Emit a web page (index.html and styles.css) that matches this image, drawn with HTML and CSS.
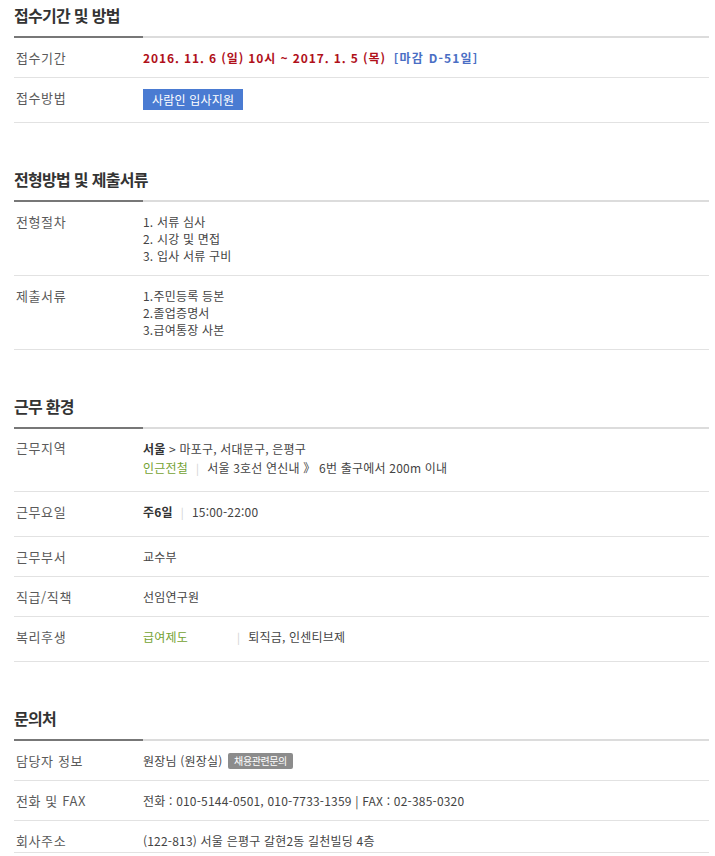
FILE: index.html
```html
<!DOCTYPE html>
<html lang="ko">
<head>
<meta charset="utf-8">
<title>채용 정보</title>
<link rel="stylesheet" href="styles.css">
</head>
<body>
<div class="page">
  <section class="sec">
    <h2 class="sec-title">접수기간 및 방법</h2>
    <div class="row">
      <div class="lbl">접수기간</div>
      <div class="val"><span class="date">2016. 11. 6 (일) 10시 ~ 2017. 1. 5 (목)</span><span class="dday">[마감 D-51일]</span></div>
    </div>
    <div class="row row-btn">
      <div class="lbl">접수방법</div>
      <div class="val"><span class="btn">사람인 입사지원</span></div>
    </div>
  </section>

  <section class="sec">
    <h2 class="sec-title">전형방법 및 제출서류</h2>
    <div class="row">
      <div class="lbl">전형절차</div>
      <div class="val">1. 서류 심사<br>2. 시강 및 면접<br>3. 입사 서류 구비</div>
    </div>
    <div class="row">
      <div class="lbl">제출서류</div>
      <div class="val">1.주민등록 등본<br>2.졸업증명서<br>3.급여통장 사본</div>
    </div>
  </section>

  <section class="sec">
    <h2 class="sec-title">근무 환경</h2>
    <div class="row row-loc">
      <div class="lbl">근무지역</div>
      <div class="val">
        <div class="line"><b class="strong">서울</b> &gt; 마포구, 서대문구, 은평구</div>
        <div class="line"><span class="green">인근전철</span><span class="sep">|</span>서울 3호선 연신내 》 6번 출구에서 200m 이내</div>
      </div>
    </div>
    <div class="row row-tall">
      <div class="lbl">근무요일</div>
      <div class="val"><b class="strong">주6일</b><span class="sep">|</span>15:00-22:00</div>
    </div>
    <div class="row">
      <div class="lbl">근무부서</div>
      <div class="val">교수부</div>
    </div>
    <div class="row">
      <div class="lbl">직급/직책</div>
      <div class="val">선임연구원</div>
    </div>
    <div class="row row-tall">
      <div class="lbl">복리후생</div>
      <div class="val"><span class="green welfare">급여제도</span><span class="sep">|</span>퇴직금, 인센티브제</div>
    </div>
  </section>

  <section class="sec">
    <h2 class="sec-title">문의처</h2>
    <div class="row">
      <div class="lbl">담당자 정보</div>
      <div class="val">원장님 (원장실) <span class="badge">채용관련문의</span></div>
    </div>
    <div class="row">
      <div class="lbl">전화 및 FAX</div>
      <div class="val">전화 : 010-5144-0501, 010-7733-1359 | FAX : 02-385-0320</div>
    </div>
    <div class="row row-last">
      <div class="lbl">회사주소</div>
      <div class="val">(122-813) 서울 은평구 갈현2동 길천빌딩 4층</div>
    </div>
  </section>
</div>
</body>
</html>
```

FILE: styles.css
```css
html, body {
  margin: 0;
  padding: 0;
  background: #fff;
}

body {
  font-family: "Noto Sans CJK KR", "Noto Sans", sans-serif;
  color: #444;
  font-size: 12px;
}

.page {
  padding: 0 6px 0 14px;
}

.sec {
  margin-bottom: 41px;
}

.sec-title {
  margin: 0;
  padding: 4px 0 12px;
  font-size: 16px;
  line-height: 22px;
  font-weight: 700;
  letter-spacing: -0.7px;
  color: #333;
  background: linear-gradient(to right, #777 0, #777 129px, #dcdcdc 129px, #dcdcdc 100%) left bottom / 100% 2px no-repeat;
}

.row {
  display: grid;
  grid-template-columns: 129px 1fr;
  padding: 11px 0;
  border-bottom: 1px solid #e2e2e2;
  line-height: 17px;
}

.row-btn {
  padding: 11px 0 12px;
}

.row-loc {
  padding: 10px 0 13px;
}

.row-loc .line {
  line-height: 19px;
}

.row-tall {
  padding: 11px 0 15px;
}

.row-last {
  padding-bottom: 3px;
}

.lbl {
  padding-left: 2px;
  font-size: 13px;
  color: #5a5a5a;
  letter-spacing: 0.6px;
}

.val {
  font-size: 12px;
  color: #444;
  letter-spacing: 0.2px;
}

.date {
  color: #b0101a;
  font-weight: 700;
  letter-spacing: 0.9px;
}

.dday {
  margin-left: 8px;
  color: #4a6ec4;
  font-weight: 700;
  letter-spacing: 1.2px;
}

.btn {
  display: inline-block;
  height: 21px;
  line-height: 21px;
  padding: 0 9px;
  background: #4a7bd2;
  color: #fff;
  letter-spacing: 0.2px;
}

.strong {
  font-weight: 700;
  color: #333;
}

.green {
  color: #74a232;
}

.welfare {
  display: inline-block;
  width: 86px;
}

.sep {
  display: inline-block;
  margin: 0 8px;
  color: #d0d0d0;
  font-size: 11px;
}

.badge {
  display: inline-block;
  margin-left: 2px;
  padding: 0 6px;
  height: 16px;
  line-height: 16px;
  background: #8c8c8c;
  color: #fff;
  font-size: 10px;
  letter-spacing: -0.4px;
  border-radius: 2px;
  vertical-align: 1px;
}
```
